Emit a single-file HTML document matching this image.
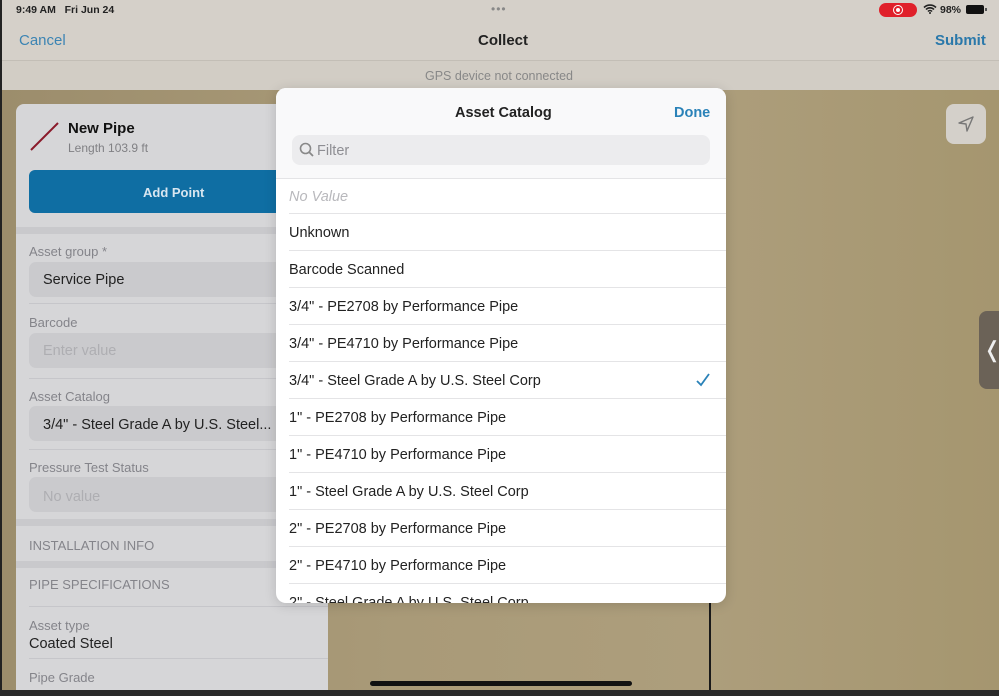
<!DOCTYPE html>
<html><head><meta charset="utf-8"><style>
*{margin:0;padding:0;box-sizing:border-box}
html{width:999px;height:696px;overflow:hidden}
body{width:999px;height:696px;overflow:hidden;position:relative;font-family:"Liberation Sans",sans-serif;background:#a99a78}
.a{position:absolute}
.t{position:absolute;white-space:nowrap;margin-top:1px}
#map{left:0;top:90px;width:999px;height:606px;background:linear-gradient(90deg,#9c8d6c 0%,#a99a78 40%,#ad9e7c 70%,#a5966f 100%)}
#top{left:0;top:0;width:999px;height:90px;background:#d5d0c9}
#nav{left:0;top:60px;width:999px;height:1px;background:#c3beb6}
#gps{left:0;top:61px;width:999px;height:29px;background:#d2cdc5}
#panel{left:16px;top:104px;width:312px;height:590px;background:#d6d6d8;border-radius:8px 8px 0 0}
.fld{position:absolute;left:29px;width:286px;height:35px;background:#cacacd;border-radius:7px}
.lbl{font-size:13px;color:#84848a}
.band{position:absolute;left:16px;width:312px;height:7px;background:#c9c9cc}
.ln{position:absolute;left:29px;width:299px;height:1px;background:#c6c6ca}
#modal{left:276px;top:88px;width:450px;height:515px;background:#fff;border-radius:10px;overflow:hidden;box-shadow:0 2px 12px rgba(0,0,0,.15)}
.row{position:absolute;left:13px;font-size:14.5px;color:#222;margin-top:1px;white-space:nowrap}
.sep{position:absolute;left:13px;right:0;height:1px;background:#e4e4e6}
</style></head><body>
<div class="a" id="map"></div>
<div class="a" style="left:709px;top:603px;width:2px;height:88px;background:#1a1a1a"></div>
<div class="a" id="top"></div>
<div class="a" id="nav"></div>
<div class="a" id="gps"></div>
<div class="t" style="left:16px;top:3px;font-size:10.5px;color:#222;font-weight:bold">9:49 AM&nbsp;&nbsp;&nbsp;Fri Jun 24</div>
<div class="t" style="left:491px;top:1px;font-size:12px;color:#888;letter-spacing:1px">•••</div>
<div class="a" style="left:879px;top:3px;width:38px;height:14px;background:#e0202a;border-radius:7px"></div>
<div class="a" style="left:893px;top:5px;width:10px;height:10px;border:1.5px solid #fff;border-radius:50%"></div>
<div class="a" style="left:896px;top:8px;width:4px;height:4px;background:#fff;border-radius:50%"></div>
<svg class="a" style="left:923px;top:4px" width="14" height="10" viewBox="0 0 14 10"><path d="M1 3.5a8.5 8.5 0 0 1 12 0M3 5.5a5.5 5.5 0 0 1 8 0M5 7.5a2.5 2.5 0 0 1 4 0" stroke="#222" stroke-width="1.6" fill="none"/><circle cx="7" cy="9" r="1" fill="#222"/></svg>
<div class="t" style="left:940px;top:3px;font-size:10.5px;color:#222;font-weight:bold">98%</div>
<div class="a" style="left:966px;top:5px;width:18px;height:9px;background:#111;border-radius:2px"></div>
<div class="a" style="left:985px;top:8px;width:1.5px;height:3px;background:#555"></div>
<div class="t" style="left:19px;top:31px;font-size:15px;color:#3c84b3">Cancel</div>
<div class="t" style="left:478px;top:31px;font-size:15px;color:#222;font-weight:bold">Collect</div>
<div class="t" style="left:935px;top:31px;font-size:15px;color:#2a78aa;font-weight:bold">Submit</div>
<div class="t" style="left:425px;top:68px;font-size:12.5px;color:#888">GPS device not connected</div>
<div class="a" style="left:946px;top:104px;width:40px;height:40px;background:#d4d0ca;border-radius:8px"></div>
<svg class="a" style="left:956px;top:114px" width="20" height="20" viewBox="0 0 20 20"><path d="M17 3 3 9l7 1 1 7z" stroke="#777" stroke-width="1.4" fill="none" stroke-linejoin="round"/></svg>
<div class="a" style="left:979px;top:311px;width:22px;height:78px;background:#6b6257;border-radius:8px 0 0 8px"></div>
<div class="t" style="left:983px;top:336px;font-size:22px;color:#eee">❬</div>

<div class="a" id="panel"></div>
<svg class="a" style="left:28px;top:120px" width="32" height="32"><line x1="3" y1="30" x2="30" y2="3" stroke="#8a1a2a" stroke-width="2"/></svg>
<div class="t" style="left:68px;top:119px;font-size:15px;color:#111;font-weight:bold">New Pipe</div>
<div class="t" style="left:68px;top:140px;font-size:12px;color:#808084">Length 103.9 ft</div>
<div class="a" style="left:29px;top:170px;width:290px;height:43px;background:#0f6ea3;border-radius:6px"></div>
<div class="t" style="left:143px;top:184px;font-size:13px;color:#d8e6f0;font-weight:bold">Add Point</div>
<div class="band" style="top:227px"></div>
<div class="t lbl" style="left:29px;top:243px">Asset group *</div>
<div class="fld" style="top:262px"></div>
<div class="t" style="left:43px;top:271px;font-size:14.5px;color:#222">Service Pipe</div>
<div class="ln" style="top:303px"></div>
<div class="t lbl" style="left:29px;top:314px">Barcode</div>
<div class="fld" style="top:333px"></div>
<div class="t" style="left:43px;top:342px;font-size:14.5px;color:#aeaeb2">Enter value</div>
<div class="ln" style="top:378px"></div>
<div class="t lbl" style="left:29px;top:388px">Asset Catalog</div>
<div class="fld" style="top:406px"></div>
<div class="t" style="left:43px;top:416px;font-size:14.5px;color:#222">3/4" - Steel Grade A by U.S. Steel...</div>
<div class="ln" style="top:449px"></div>
<div class="t lbl" style="left:29px;top:459px">Pressure Test Status</div>
<div class="fld" style="top:477px"></div>
<div class="t" style="left:43px;top:488px;font-size:14.5px;color:#aeaeb2">No value</div>
<div class="band" style="top:519px"></div>
<div class="t lbl" style="left:29px;top:537px">INSTALLATION INFO</div>
<div class="band" style="top:561px"></div>
<div class="t lbl" style="left:29px;top:576px">PIPE SPECIFICATIONS</div>
<div class="ln" style="top:606px"></div>
<div class="t lbl" style="left:29px;top:617px">Asset type</div>
<div class="t" style="left:29px;top:635px;font-size:14.5px;color:#222">Coated Steel</div>
<div class="ln" style="top:658px"></div>
<div class="t lbl" style="left:29px;top:669px">Pipe Grade</div>
<div class="t" style="left:29px;top:689px;font-size:14.5px;color:#222">Grade A</div>

<div class="a" id="modal">
<div class="a" style="left:0;top:0;width:450px;height:90px;background:#f9f9fa"></div>
<div class="t" style="left:179px;top:16px;font-size:14.5px;color:#222;font-weight:bold">Asset Catalog</div>
<div class="t" style="left:398px;top:16px;font-size:14.5px;color:#2a82b8;font-weight:bold">Done</div>
<div class="a" style="left:16px;top:47px;width:418px;height:30px;background:#ececee;border-radius:8px"></div>
<svg class="a" style="left:22px;top:53px" width="18" height="18" viewBox="0 0 18 18"><circle cx="7.5" cy="7.5" r="5" stroke="#888" stroke-width="1.6" fill="none"/><line x1="11" y1="11" x2="15" y2="15" stroke="#888" stroke-width="1.8"/></svg>
<div class="t" style="left:41px;top:54px;font-size:14.5px;color:#8e8e93">Filter</div>
<div class="sep" style="top:90px;left:0"></div>
<div class="row" style="top:100px;color:#b8b8bc;font-style:italic">No Value</div>
<div class="sep" style="top:125px"></div>
<div class="row" style="top:136px">Unknown</div>
<div class="sep" style="top:162px"></div>
<div class="row" style="top:173px">Barcode Scanned</div>
<div class="sep" style="top:199px"></div>
<div class="row" style="top:210px">3/4" - PE2708 by Performance Pipe</div>
<div class="sep" style="top:236px"></div>
<div class="row" style="top:247px">3/4" - PE4710 by Performance Pipe</div>
<div class="sep" style="top:273px"></div>
<div class="row" style="top:284px">3/4" - Steel Grade A by U.S. Steel Corp</div>
<svg class="a" style="left:419px;top:284px" width="16" height="16" viewBox="0 0 16 16"><path d="M2 9l4 4 8-11" stroke="#2a82b8" stroke-width="1.8" fill="none"/></svg>
<div class="sep" style="top:310px"></div>
<div class="row" style="top:321px">1" - PE2708 by Performance Pipe</div>
<div class="sep" style="top:347px"></div>
<div class="row" style="top:358px">1" - PE4710 by Performance Pipe</div>
<div class="sep" style="top:384px"></div>
<div class="row" style="top:395px">1" - Steel Grade A by U.S. Steel Corp</div>
<div class="sep" style="top:421px"></div>
<div class="row" style="top:432px">2" - PE2708 by Performance Pipe</div>
<div class="sep" style="top:458px"></div>
<div class="row" style="top:469px">2" - PE4710 by Performance Pipe</div>
<div class="sep" style="top:495px"></div>
<div class="row" style="top:506px">2" - Steel Grade A by U.S. Steel Corp</div>
</div>

<div class="a" style="left:370px;top:681px;width:262px;height:5px;background:#111;border-radius:3px"></div>
<div class="a" style="left:0;top:0;width:2px;height:696px;background:#222"></div>
<div class="a" style="left:0;top:690px;width:999px;height:6px;background:#2a2a2a"></div>
</body></html>
